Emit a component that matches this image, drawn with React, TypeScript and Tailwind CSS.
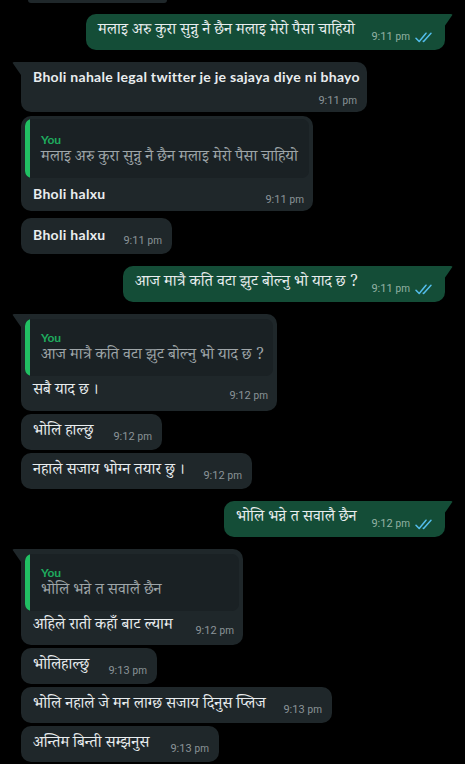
import React from "react";

const DEV =
  "font-['Noto_Serif_Devanagari','Noto_Sans_Devanagari','Lohit_Devanagari','Mukta','FreeSans',sans-serif]";
const LAT = "font-['Lato',sans-serif] font-bold tracking-[0.3px]";

function Ticks() {
  return (
    <svg width="18" height="11" viewBox="0 0 18 11" className="ml-[5px] mb-[1px]" fill="none">
      <path d="M1 6.2 L4.2 9.5 L11 1.2" stroke="#53bdeb" strokeWidth="1.5" strokeLinecap="round" strokeLinejoin="round" />
      <path d="M8.2 9.2 L8.6 9.5 L16 1.2" stroke="#53bdeb" strokeWidth="1.5" strokeLinecap="round" strokeLinejoin="round" />
    </svg>
  );
}

function Time({ t, out }: { t: string; out?: boolean }) {
  return (
    <span
      className={`flex items-end shrink-0 whitespace-nowrap font-['Roboto',sans-serif] text-[11px] leading-[14px] ${
        out ? "text-[#93b2a4]" : "text-[#8b9498]"
      }`}
    >
      <span>{t}</span>
      <span className="ml-[3px] text-[10px]">pm</span>
      {out && <Ticks />}
    </span>
  );
}

function OutTail() {
  return (
    <svg className="absolute right-[-8px] top-0" width="9" height="13" viewBox="0 0 9 13">
      <path d="M0 0 H7 Q9 0 8 1.6 L0 13 Z" fill="#144d37" />
    </svg>
  );
}

function InTail() {
  return (
    <svg className="absolute left-[-9px] top-0" width="9" height="13" viewBox="0 0 9 13">
      <path d="M9 0 H2 Q0 0 1 1.6 L9 13 Z" fill="#1f272a" />
    </svg>
  );
}

function Out({ text, time, w, mt }: { text: string; time: string; w: string; mt: string }) {
  return (
    <div className={`flex justify-end pr-[20px] ${mt}`}>
      <div className={`relative ${w} h-[36px] rounded-[10px] rounded-tr-none bg-[#144d37] flex items-end justify-between pl-[12px] pr-[12px] pt-[6px] pb-[6px]`}>
        <OutTail />
        <span className={`${DEV} text-[15.6px] leading-[20px] mb-[2px] text-[#e9edef] whitespace-nowrap`}>{text}</span>
        <Time t={time} out />
      </div>
    </div>
  );
}

function In({
  text,
  time,
  w,
  mt,
  latin,
  tail,
}: {
  text: string;
  time: string;
  w: string;
  mt: string;
  latin?: boolean;
  tail?: boolean;
}) {
  return (
    <div className={`pl-[21px] ${mt}`}>
      <div
        className={`relative ${w} h-[36px] rounded-[10px] ${tail ? "rounded-tl-none" : ""} bg-[#1f272a] flex items-end justify-between pl-[12px] pr-[10px] pt-[7px] pb-[6px]`}
      >
        {tail && <InTail />}
        <span
          className={`${latin ? LAT + " text-[14px] mb-[3px]" : DEV + " text-[15.6px] mb-[1px]"} leading-[20px] text-[#e9edef] whitespace-nowrap`}
        >
          {text}
        </span>
        <Time t={time} />
      </div>
    </div>
  );
}

function InMulti({ text, time, w, mt, tail }: { text: string; time: string; w: string; mt: string; tail?: boolean }) {
  return (
    <div className={`pl-[21px] ${mt}`}>
      <div
        className={`relative ${w} h-[50px] rounded-[10px] ${tail ? "rounded-tl-none" : ""} bg-[#1f272a] flex flex-col pl-[12px] pr-[10px] pt-[5px] pb-[4px]`}
      >
        {tail && <InTail />}
        <span className={`${LAT} text-[14px] leading-[20px] text-[#e9edef] whitespace-nowrap`}>{text}</span>
        <div className="flex justify-end mt-[7px]">
          <Time t={time} />
        </div>
      </div>
    </div>
  );
}

function InQuote({
  quote,
  text,
  time,
  w,
  h,
  mt,
  tail,
  latin,
}: {
  quote: string;
  text: string;
  time: string;
  w: string;
  h: string;
  mt: string;
  tail?: boolean;
  latin?: boolean;
}) {
  return (
    <div className={`pl-[21px] ${mt}`}>
      <div
        className={`relative ${w} ${h} rounded-[10px] ${tail ? "rounded-tl-none" : ""} bg-[#1f272a] flex flex-col px-[4px] ${
          tail ? "pt-[5px]" : "pt-[3px]"
        }`}
      >
        {tail && <InTail />}
        <div className="flex rounded-[7px] bg-[#1a2124] overflow-hidden">
          <div className="w-[5px] shrink-0 bg-[#21c063] rounded-l-[7px]" />
          <div className={`flex flex-col pl-[11px] pr-[8px] ${tail ? "pt-[11px]" : "pt-[13px]"} pb-[8px]`}>
            <span className="font-['Lato',sans-serif] font-bold text-[12px] leading-[16px] text-[#1fab5e]">You</span>
            <span className={`${DEV} text-[15.6px] leading-[22px] text-[#9ea5a8] whitespace-nowrap`}>{quote}</span>
          </div>
        </div>
        <div className="flex items-end justify-between pl-[8px] pr-[5px] pt-[6px]">
          <span
            className={`${latin ? LAT + " text-[14px] mb-[3px]" : DEV + " text-[15.6px] mb-[1px]"} leading-[20px] text-[#e9edef] whitespace-nowrap`}
          >
            {text}
          </span>
          <Time t={time} />
        </div>
      </div>
    </div>
  );
}

export default function App() {
  return (
    <div className="w-[465px] h-[764px] bg-black overflow-hidden flex flex-col">
      <div className="ml-[28px] w-[139px] h-[3px] rounded-b-[3px] bg-[#1f272a] shrink-0" />
      <Out
        mt="mt-[11px]"
        w="w-[359px]"
        text="मलाइ अरु कुरा सुन्नु नै छैन मलाइ मेरो पैसा चाहियो"
        time="9:11"
      />
      <InMulti
        mt="mt-[12px]"
        w="w-[346px]"
        tail
        text="Bholi nahale legal twitter je je sajaya diye ni bhayo"
        time="9:11"
      />
      <InQuote
        mt="mt-[4px]"
        w="w-[292px]"
        h="h-[95px]"
        latin
        quote="मलाइ अरु कुरा सुन्नु नै छैन मलाइ मेरो पैसा चाहियो"
        text="Bholi halxu"
        time="9:11"
      />
      <In mt="mt-[7px]" w="w-[151px]" latin text="Bholi halxu" time="9:11" />
      <Out mt="mt-[12px]" w="w-[322px]" text="आज मात्रै कति वटा झुट बोल्नु भो याद छ ?" time="9:11" />
      <InQuote
        mt="mt-[12px]"
        w="w-[256px]"
        h="h-[97px]"
        tail
        quote="आज मात्रै कति वटा झुट बोल्नु भो याद छ ?"
        text="सबै याद छ ।"
        time="9:12"
      />
      <In mt="mt-[3px]" w="w-[141px]" text="भोलि हाल्छु" time="9:12" />
      <In mt="mt-[3px]" w="w-[231px]" text="नहाले सजाय भोग्न तयार छु ।" time="9:12" />
      <Out mt="mt-[12px]" w="w-[221px]" text="भोलि भन्ने त सवालै छैन" time="9:12" />
      <InQuote
        mt="mt-[12px]"
        w="w-[222px]"
        h="h-[96px]"
        tail
        quote="भोलि भन्ने त सवालै छैन"
        text="अहिले राती कहाँ बाट ल्याम"
        time="9:12"
      />
      <In mt="mt-[3px]" w="w-[136px]" text="भोलिहाल्छु" time="9:13" />
      <In mt="mt-[3px]" w="w-[311px]" text="भोलि नहाले जे मन लाग्छ सजाय दिनुस प्लिज" time="9:13" />
      <In mt="mt-[3px]" w="w-[198px]" text="अन्तिम बिन्ती सम्झनुस" time="9:13" />
    </div>
  );
}
